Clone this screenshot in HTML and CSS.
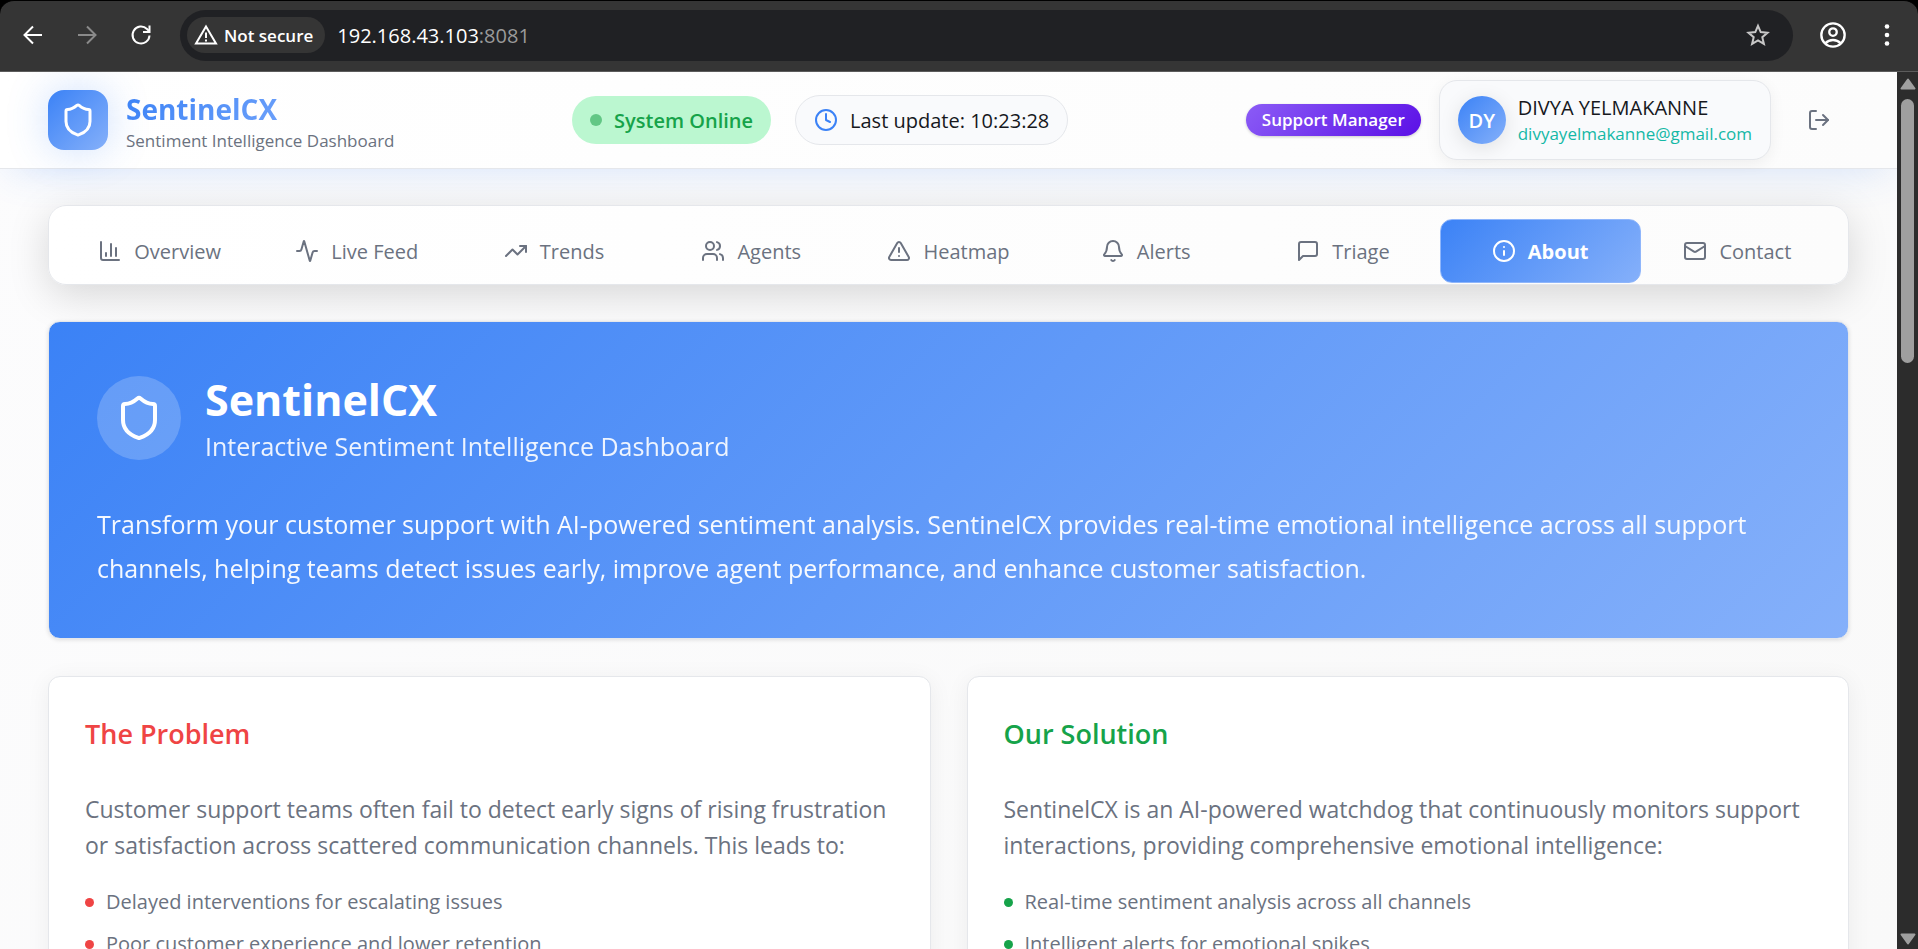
FILE: index.html
```html
<!DOCTYPE html>
<html lang="en">
<head>
<meta charset="utf-8">
<meta name="viewport" content="width=device-width, initial-scale=1">
<title>SentinelCX</title>
<link rel="stylesheet" href="styles.css">
</head>
<body>
<svg class="sprite" aria-hidden="true">
  <symbol id="shield" viewBox="0 0 24 24"><path d="M20 13c0 5-3.5 7.5-7.66 8.95a1 1 0 0 1-.67-.01C7.5 20.500 4 18 4 13V6a1 1 0 0 1 1-1c2 0 4.500-1.200 6.240-2.720a1.170 1.170 0 0 1 1.520 0C14.510 3.810 17 5 19 5a1 1 0 0 1 1 1z"/></symbol>
  <symbol id="warning" viewBox="0 0 24 24"><path d="m21.730 18-8-14a2 2 0 0 0-3.480 0l-8 14A2 2 0 0 0 4 21h16a2 2 0 0 0 1.730-3"/><path d="M12 9v4"/><path d="M12 17h.01"/></symbol>
</svg>
<div class="browser-bar">
  <button class="tool" type="button" aria-label="Back"><svg class="tool-icon" viewBox="0 0 24 24"><path d="M21 12H4M12 3.500 3.500 12l8.500 8.500"/></svg></button>
  <button class="tool tool-dim" type="button" aria-label="Forward"><svg class="tool-icon" viewBox="0 0 24 24"><path d="M3 12h17M12 3.500 20.500 12 12 20.500"/></svg></button>
  <button class="tool" type="button" aria-label="Reload"><svg class="tool-icon" viewBox="0 0 24 24"><path d="M20.500 12.500a8.500 8.500 0 1 1-2.500-6.500l2 2"/><path d="M20.500 2.500v6.500H14"/></svg></button>
  <div class="omnibox">
    <button class="security" type="button"><svg class="security-icon" viewBox="0 0 24 24"><path d="M12 3.500 22 20.500H2z"/><path d="M12 9.500v5.500M12 16.500v2"/></svg>Not secure</button>
    <div class="address">192.168.43.103<span class="port">:8081</span></div>
    <button class="star" type="button" aria-label="Bookmark"><svg class="tool-icon" viewBox="0 0 24 24"><path d="m12 2.800 2.700 6.300 6.800.6-5.200 4.500 1.600 6.700-5.900-3.600-5.900 3.600 1.600-6.700L2.500 9.700l6.800-.6z"/></svg></button>
  </div>
  <button class="tool profile" type="button" aria-label="Profile"><svg class="profile-icon" viewBox="0 0 24 24"><circle cx="12" cy="12" r="10"/><circle cx="12" cy="9.500" r="3.200"/><path d="M5.500 19c3.500-3.600 9.500-3.600 13 0"/></svg></button>
  <button class="tool more" type="button" aria-label="Menu"><svg class="more-icon" viewBox="0 0 24 24"><circle cx="12" cy="3.500" r="2.300"/><circle cx="12" cy="12" r="2.300"/><circle cx="12" cy="20.500" r="2.300"/></svg></button>
</div>
<div class="viewport">
  <div class="page">
    <header class="header">
      <div class="brand">
        <div class="logo"><svg class="icon logo-icon"><use href="#shield"/></svg></div>
        <div class="brand-words">
          <div class="brand-name">SentinelCX</div>
          <div class="brand-tag">Sentiment Intelligence Dashboard</div>
        </div>
      </div>
      <div class="status">
        <div class="online"><span class="online-dot"></span>System Online</div>
        <div class="update"><svg class="icon clock" viewBox="0 0 24 24"><circle cx="12" cy="12" r="10"/><path d="M12 6v6l4 2"/></svg>Last update: 10:23:28</div>
      </div>
      <div class="account">
        <span class="role">Support Manager</span>
        <div class="user">
          <div class="avatar">DY</div>
          <div>
            <div class="user-name">DIVYA YELMAKANNE</div>
            <div class="user-mail">divyayelmakanne@gmail.com</div>
          </div>
        </div>
        <button class="logout" type="button" aria-label="Log out"><svg class="icon" viewBox="0 0 24 24"><path d="M9 21H5a2 2 0 0 1-2-2V5a2 2 0 0 1 2-2h4"/><path d="m16 17 5-5-5-5"/><path d="M21 12H9"/></svg></button>
      </div>
    </header>
    <main class="main">
      <nav class="tabs">
        <button class="tab" type="button"><svg class="icon" viewBox="0 0 24 24"><path d="M3 3v16a2 2 0 0 0 2 2h16"/><path d="M18 17V9"/><path d="M13 17V5"/><path d="M8 17v-3"/></svg>Overview</button>
        <button class="tab" type="button"><svg class="icon" viewBox="0 0 24 24"><path d="M22 12h-2.480a2 2 0 0 0-1.930 1.460l-2.350 8.360a.25.25 0 0 1-.48 0L9.240 2.180a.25.25 0 0 0-.48 0l-2.350 8.360A2 2 0 0 1 4.490 12H2"/></svg>Live Feed</button>
        <button class="tab" type="button"><svg class="icon" viewBox="0 0 24 24"><path d="m22 7-8.500 8.500-5-5L2 17"/><path d="M16 7h6v6"/></svg>Trends</button>
        <button class="tab" type="button"><svg class="icon" viewBox="0 0 24 24"><path d="M16 21v-2a4 4 0 0 0-4-4H6a4 4 0 0 0-4 4v2"/><circle cx="9" cy="7" r="4"/><path d="M22 21v-2a4 4 0 0 0-3-3.870"/><path d="M16 3.130a4 4 0 0 1 0 7.750"/></svg>Agents</button>
        <button class="tab" type="button"><svg class="icon"><use href="#warning"/></svg>Heatmap</button>
        <button class="tab" type="button"><svg class="icon" viewBox="0 0 24 24"><path d="M10.270 21a2 2 0 0 0 3.460 0"/><path d="M3.260 15.330A1 1 0 0 0 4 17h16a1 1 0 0 0 .74-1.670C19.410 13.960 18 12.500 18 8A6 6 0 0 0 6 8c0 4.500-1.410 5.960-2.740 7.330"/></svg>Alerts</button>
        <button class="tab" type="button"><svg class="icon" viewBox="0 0 24 24"><path d="M21 15a2 2 0 0 1-2 2H7l-4 4V5a2 2 0 0 1 2-2h14a2 2 0 0 1 2 2z"/></svg>Triage</button>
        <button class="tab tab-active" type="button" aria-current="page"><svg class="icon" viewBox="0 0 24 24"><circle cx="12" cy="12" r="10"/><path d="M12 16v-4"/><path d="M12 8h.01"/></svg>About</button>
        <button class="tab" type="button"><svg class="icon" viewBox="0 0 24 24"><rect x="2" y="4" width="20" height="16" rx="2"/><path d="m22 7-8.970 5.700a1.940 1.940 0 0 1-2.060 0L2 7"/></svg>Contact</button>
      </nav>
      <section class="hero">
        <div class="hero-head">
          <div class="hero-badge"><svg class="icon hero-icon"><use href="#shield"/></svg></div>
          <div class="hero-words">
            <h1 class="hero-title">SentinelCX</h1>
            <p class="hero-sub">Interactive Sentiment Intelligence Dashboard</p>
          </div>
        </div>
        <p class="hero-text">Transform your customer support with AI-powered sentiment analysis. SentinelCX provides real-time emotional intelligence across all support channels, helping teams detect issues early, improve agent performance, and enhance customer satisfaction.</p>
      </section>
      <div class="cards">
        <section class="card card-problem">
          <h2 class="card-title">The Problem</h2>
          <p class="card-text">Customer support teams often fail to detect early signs of rising frustration or satisfaction across scattered communication channels. This leads to:</p>
          <ul class="points">
            <li class="point">Delayed interventions for escalating issues</li>
            <li class="point">Poor customer experience and lower retention</li>
          </ul>
        </section>
        <section class="card card-solution">
          <h2 class="card-title">Our Solution</h2>
          <p class="card-text">SentinelCX is an AI-powered watchdog that continuously monitors support interactions, providing comprehensive emotional intelligence:</p>
          <ul class="points">
            <li class="point">Real-time sentiment analysis across all channels</li>
            <li class="point">Intelligent alerts for emotional spikes</li>
          </ul>
        </section>
      </div>
    </main>
  </div>
  <div class="scrollbar" aria-hidden="true">
    <svg class="arrow" viewBox="0 0 16 12"><path d="M8 1.500 14.500 10.500H1.500z"/></svg>
    <div class="track"><div class="thumb"></div></div>
    <svg class="arrow" viewBox="0 0 16 12"><path d="M8 10.500 14.500 1.500H1.500z"/></svg>
  </div>
</div>
</body>
</html>
```
FILE: styles.css
```css
:root {
  --blue: #3b82f6;
  --blue-light: #85b0fa;
  --muted: #6b7280;
  --line: #e5e7eb;
  --blend: linear-gradient(135deg, var(--blue), var(--blue-light));
}
* { box-sizing: border-box; }
body {
  margin: 0;
  height: 100vh;
  display: flex;
  flex-direction: column;
  overflow: hidden;
  background: #000;
  font-family: "Open Sans", "Noto Sans", sans-serif;
  color: #16181d;
}
h1, h2, p, ul { margin: 0; padding: 0; }
button { font: inherit; color: inherit; border: 0; padding: 0; background: none; cursor: pointer; }
.sprite { display: none; }
.icon {
  width: 24px;
  height: 24px;
  flex: none;
  fill: none;
  stroke: currentColor;
  stroke-width: 2;
  stroke-linecap: round;
  stroke-linejoin: round;
}

.browser-bar {
  flex: none;
  display: flex;
  align-items: center;
  height: 72px;
  padding: 0 16px 2px 18px;
  gap: 10px;
  background: #353535;
  border-top: 1px solid #000;
  border-bottom: 1px solid #5c5c5c;
  border-radius: 14px 14px 0 0;
  color: #fff;
}
.tool {
  display: flex;
  align-items: center;
  justify-content: center;
  width: 30px;
  height: 44px;
  margin-right: 14px;
}
.tool-dim { color: #8a8a8a; }
.tool-icon, .profile-icon, .security-icon {
  width: 24px;
  height: 24px;
  fill: none;
  stroke: currentColor;
  stroke-width: 2;
}
.omnibox {
  flex: 1;
  display: flex;
  align-items: center;
  height: 51px;
  padding: 0 23px 0 7px;
  border-radius: 26px;
  background: #202124;
}
.security {
  display: flex;
  align-items: center;
  gap: 6px;
  height: 36px;
  padding: 0 12px 0 7px;
  border-radius: 18px;
  background: #353535;
  font-size: 17px;
  font-weight: 600;
}
.address { flex: 1; padding-left: 12px; font-size: 20px; }
.port { color: #9a9a9a; }
.star { display: flex; color: #c7c7c7; }
.profile { margin: 0 14px 0 15px; }
.profile-icon { width: 28px; height: 28px; }
.more { margin-right: 0; }
.more-icon { width: 24px; height: 24px; fill: #fff; }

.viewport { flex: 1; display: flex; min-height: 0; }
.page {
  flex: 1;
  min-width: 0;
  overflow: hidden;
  background: linear-gradient(135deg, #fcfcfd, #f9f9f9);
}
.header {
  display: flex;
  align-items: center;
  justify-content: space-between;
  height: 97px;
  padding: 0 48px;
  background: linear-gradient(90deg, #fff, #fcfcfc);
  border-bottom: 1px solid var(--line);
  box-shadow: 0 10px 40px -10px rgba(59, 130, 246, 0.2);
}
.brand { display: flex; align-items: center; gap: 18px; }
.logo {
  display: flex;
  align-items: center;
  justify-content: center;
  width: 60px;
  height: 60px;
  border-radius: 16px;
  background: var(--blend);
  box-shadow: 0 0 40px rgba(59, 130, 246, 0.25);
  color: #fff;
}
.logo-icon { width: 36px; height: 36px; }
.brand-words { padding-top: 6px; }
.brand-name {
  width: max-content;
  font-size: 28px;
  line-height: 36px;
  font-weight: 700;
  color: transparent;
  background: linear-gradient(135deg, var(--blue), #6ca0fa);
  background-clip: text;
}
.brand-tag { font-size: 17px; line-height: 28px; color: var(--muted); }
.status { display: flex; align-items: center; gap: 24px; font-size: 20px; }
.online {
  display: flex;
  align-items: center;
  gap: 12px;
  height: 48px;
  padding: 0 18px;
  border-radius: 24px;
  background: #bbf7d0;
  color: #16a34a;
  font-weight: 600;
}
.online-dot { width: 12px; height: 12px; border-radius: 50%; background: #62c785; }
.update {
  display: flex;
  align-items: center;
  gap: 12px;
  height: 50px;
  padding: 0 18px;
  border: 1px solid var(--line);
  border-radius: 25px;
  background: #f9fafc;
}
.clock { color: var(--blue); }
.account { display: flex; align-items: center; }
.role {
  padding: 0 16px;
  border-radius: 16px;
  background: linear-gradient(135deg, #8b5cf6, #5b10e6);
  box-shadow: 0 1px 3px rgba(0, 0, 0, 0.2);
  color: #fff;
  font-size: 17px;
  line-height: 32px;
  font-weight: 600;
}
.user {
  display: flex;
  align-items: center;
  gap: 12px;
  height: 80px;
  margin: 0 18px;
  padding: 0 18px;
  border: 1px solid var(--line);
  border-radius: 18px;
  background: #f9fafc;
  box-shadow: 0 4px 16px rgba(0, 0, 0, 0.06);
}
.avatar {
  display: flex;
  align-items: center;
  justify-content: center;
  width: 48px;
  height: 48px;
  border-radius: 50%;
  background: var(--blend);
  box-shadow: 0 4px 20px rgba(0, 0, 0, 0.1);
  color: #fff;
  font-size: 20px;
  font-weight: 600;
}
.user-name { font-size: 20px; line-height: 28px; font-weight: 500; }
.user-mail { font-size: 17px; line-height: 24px; color: #14b8a6; }
.logout {
  display: flex;
  align-items: center;
  justify-content: center;
  width: 60px;
  height: 48px;
  color: var(--muted);
}

.main { padding: 36px 48px 0; }
.tabs {
  display: grid;
  grid-template-columns: repeat(9, 1fr);
  height: 80px;
  margin-bottom: 36px;
  padding: 13px 12px 0;
  border: 1px solid var(--line);
  border-radius: 18px;
  background: linear-gradient(90deg, #fff, #fcfcfc);
  box-shadow: 0 10px 40px rgba(0, 0, 0, 0.15);
}
.tab {
  display: flex;
  align-items: center;
  justify-content: center;
  gap: 12px;
  height: 64px;
  border-radius: 12px;
  color: var(--muted);
  font-size: 20px;
  font-weight: 500;
}
.tab-active {
  margin: 0 -2px;
  border: 1px solid #8fb6fb;
  background: var(--blend);
  color: #fff;
  font-weight: 700;
}
.hero {
  margin-bottom: 37px;
  padding: 48px;
  border: 1px solid var(--line);
  border-radius: 12px;
  background: var(--blend) border-box;
  box-shadow: 0 1px 4px rgba(0, 0, 0, 0.12);
  color: #fff;
}
.hero-head { display: flex; align-items: center; gap: 24px; margin-bottom: 36px; }
.hero-words { padding-top: 4px; }
.hero-badge {
  display: flex;
  align-items: center;
  justify-content: center;
  width: 84px;
  height: 84px;
  border-radius: 50%;
  background: rgba(255, 255, 255, 0.2);
}
.hero-icon { width: 48px; height: 48px; }
.hero-title { font-size: 43px; line-height: 52px; font-weight: 700; }
.hero-sub { font-size: 25px; line-height: 40px; opacity: 0.9; }
.hero-text { font-size: 25px; line-height: 44px; opacity: 0.95; }

.cards { display: grid; grid-template-columns: 1fr 1fr; gap: 36px; }
.card {
  min-height: 360px;
  padding: 36px;
  border: 1px solid var(--line);
  border-radius: 12px;
  background: #fff;
  box-shadow: 0 4px 24px rgba(0, 0, 0, 0.06);
}
.card-title {
  margin-bottom: 36px;
  color: var(--accent);
  font-size: 27px;
  line-height: 42px;
  font-weight: 600;
}
.card-text { margin-bottom: 24px; font-size: 23px; line-height: 36px; color: var(--muted); }
.card-problem { --accent: #ef4444; }
.card-solution { --accent: #16a34a; }
.points { list-style: none; display: grid; gap: 12px; }
.point {
  display: flex;
  align-items: center;
  gap: 12px;
  color: var(--muted);
  font-size: 20px;
  line-height: 30px;
}
.point::before {
  content: "";
  width: 9px;
  height: 9px;
  border-radius: 50%;
  background: var(--accent);
}

.scrollbar {
  flex: none;
  display: flex;
  flex-direction: column;
  align-items: center;
  width: 21px;
  padding: 6px 0 4px;
  gap: 9px;
  background: #2c2c2c;
}
.arrow { width: 16px; height: 12px; fill: #9f9f9f; stroke: #9f9f9f; stroke-width: 2; stroke-linejoin: round; }
.track { flex: 1; }
.thumb { width: 13px; height: 32%; border-radius: 7px; background: #9f9f9f; }
```
